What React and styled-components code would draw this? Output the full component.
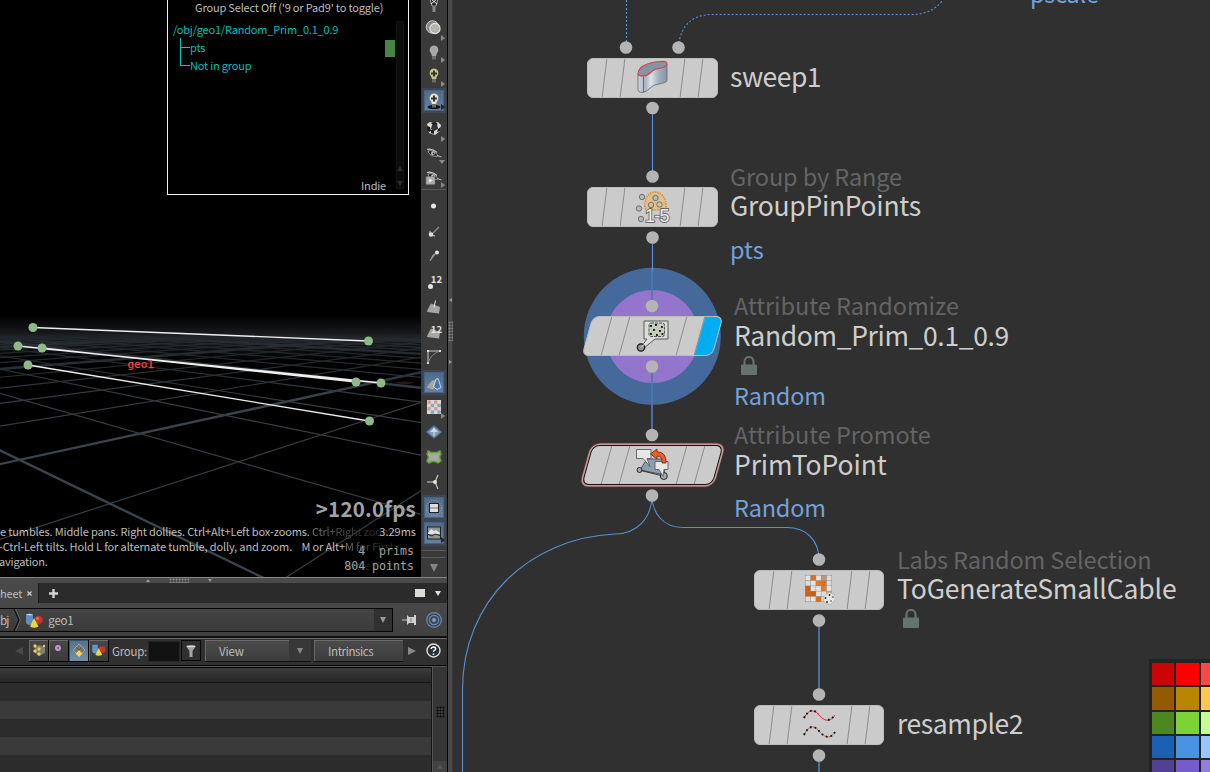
import React from 'react';
import styled, { createGlobalStyle, css } from 'styled-components';

const Global = createGlobalStyle`
  * { box-sizing: border-box; }
  html, body { margin: 0; padding: 0; background: #303030; overflow: hidden; }
  body { font-family: "Noto Sans CJK SC", "Noto Sans", sans-serif; color: #c4c4c4; }
  svg { display: block; }
`;

const Shell = styled.div`
  display: flex;
  width: 1210px;
  height: 772px;
  overflow: hidden;
`;
const LeftPane = styled.div`
  display: flex;
  flex-direction: column;
  width: 447px;
  flex: none;
  background: #303030;
`;
const ViewRow = styled.div`
  display: flex;
  height: 577px;
  flex: none;
`;
const Viewport = styled.div`
  position: relative;
  width: 421px;
  height: 577px;
  background: #000;
  overflow: hidden;
`;
const Scene = styled.svg`
  position: absolute;
  inset: 0;
`;
const Label = styled.span`
  font-size: ${p => p.$size || 11}px;
  letter-spacing: ${p => (p.$track === undefined ? -0.19 : p.$track)}px;
  line-height: ${p => p.$line || 18}px;
  color: ${p => p.$color || '#bdbdbd'};
  white-space: pre;
`;

/* group list overlay */
const GroupPanel = styled.div`
  position: absolute;
  left: 167px;
  top: -10px;
  width: 242px;
  height: 205px;
  border: 1px solid #f2f2f2;
  background: #000;
  display: flex;
  flex-direction: column;
  padding: 7px 2px 2px 5px;
`;
const PanelTitle = styled.div`
  display: flex;
  height: 22px;
  padding-left: 22px;
`;
const PanelBody = styled.div`
  display: flex;
  flex: 1;
  justify-content: space-between;
`;
const Tree = styled.div`
  display: flex;
  flex-direction: column;
  flex: 1;
`;
const TreeRow = styled.div`
  display: flex;
  height: 18px;
  padding-left: ${p => (p.$child ? 7 : 0)}px;
`;
const Branch = styled.div`
  width: 10px;
  height: ${p => (p.$last ? 10 : 18)}px;
  border-left: 1px solid #00c8c4;
  position: relative;
  &::after {
    content: '';
    position: absolute;
    left: 0;
    top: 9px;
    width: 9px;
    border-top: 1px solid #00c8c4;
  }
`;
const Swatch = styled.div`
  width: 10px;
  height: 17px;
  margin-top: 20px;
  background: #4a8447;
`;
const Scroller = styled.div`
  width: 8px;
  height: 168px;
  margin: 1px 2px 0 1px;
  background: #0c0c0c;
  border: 1px solid #121212;
  display: flex;
  flex-direction: column;
  justify-content: flex-end;
  gap: 10px;
  align-items: center;
  padding-bottom: 2px;
`;
const PanelFoot = styled.div`
  position: absolute;
  right: 22px;
  bottom: -1px;
`;

const Fps = styled.div`
  position: absolute;
  right: 5px;
  top: 493px;
  font: bold 20.5px/30px "Noto Sans CJK SC", sans-serif;
  letter-spacing: 0.25px;
  color: #a2a2a2;
`;
const Stats = styled.div`
  position: absolute;
  right: 7px;
  top: 544px;
  display: flex;
  flex-direction: column;
  align-items: flex-end;
  font: 11.6px/15px "DejaVu Sans Mono", monospace;
  color: #a0a0a0;
  white-space: pre;
`;
const Millis = styled.div`
  position: absolute;
  right: 5px;
  top: 522px;
  line-height: 18px;
  display: flex;
`;
const Edition = styled.div`
  position: absolute;
  left: 346px;
  top: 551px;
`;
const Hints = styled.div`
  position: absolute;
  left: -5px;
  top: 524px;
  display: flex;
  flex-direction: column;
`;
const HintLine = styled.div`
  display: flex;
  height: 15px;
  padding-left: ${p => p.$pad || 0}px;
`;
const Fade = styled(Label)`
  background: linear-gradient(90deg, #777, #3a3a3a 50%, #222);
  background-clip: text;
  -webkit-background-clip: text;
  color: transparent;
`;

/* vertical tool strip */
const Strip = styled.div`
  width: 26px;
  height: 577px;
  background: #3a3a3a;
  display: flex;
  flex-direction: column;
  overflow: hidden;
`;
const Tool = styled.div`
  position: relative;
  height: ${p => p.$h}px;
  flex: none;
  display: flex;
  align-items: center;
  justify-content: center;
  margin: 0 1px;
  ${p => p.$on && css`
    background: linear-gradient(#4e6a8c, #66819f);
    border: 2px solid #3b4756;
    box-shadow: inset 0 0 0 1px #4a6280;
  `}
  ${p => p.$rule && css`border-bottom: 1px solid #5a5a5a;`}
`;
const Corner = styled.span`
  position: absolute;
  right: ${p => (p.$on ? -1 : 1)}px;
  bottom: 1px;
  border-style: solid;
  ${p => p.$down
    ? css`border-width: 4px 3.5px 0; border-color: #8a8a8a transparent;`
    : css`border-width: 3.5px 0 3.5px 4px; border-color: transparent ${p.$on ? '#222' : '#8a8a8a'};`}
`;
const Arrow = styled.span`
  width: 0;
  height: 0;
  border-style: solid;
  ${p => {
    const s = p.$s || 4;
    const h = p.$len || s * 1.6;
    const c = p.$c || '#9a9a9a';
    if (p.$dir === 'down') return css`border-width: ${h}px ${s}px 0; border-color: ${c} transparent;`;
    if (p.$dir === 'up') return css`border-width: 0 ${s}px ${h}px; border-color: ${c} transparent;`;
    if (p.$dir === 'left') return css`border-width: ${s}px ${h}px ${s}px 0; border-color: transparent ${c};`;
    return css`border-width: ${s}px 0 ${s}px ${h}px; border-color: transparent ${c};`;
  }}
`;

/* lower pane */
const Splitter = styled.div`
  height: 6px;
  background: #4a4a4a;
  border-top: 1px solid #858585;
  display: flex;
  align-items: center;
  padding-left: 146px;
  gap: 19px;
`;
const Dots = styled.span`
  width: ${p => p.$w}px;
  height: ${p => p.$h}px;
  background-image: radial-gradient(circle, ${p => p.$c || '#909090'} 0.9px, transparent 1.1px);
  background-size: 3px 3px;
`;
const Tabs = styled.div`
  display: flex;
  height: 20px;
  background: #2b2b2b;
  align-items: center;
  padding-right: 6px;
`;
const Tab = styled.div`
  display: flex;
  align-items: center;
  justify-content: space-between;
  width: 39px;
  height: 20px;
  padding-right: 6px;
  background: #484848;
  border-right: 1px solid #1a1a1a;
  overflow: hidden;
`;
const Spacer = styled.div` flex: 1; `;
const Square = styled.span`
  width: 10px;
  height: 8px;
  margin-right: 10px;
  background: #dddcd6;
`;
const AddTab = styled.svg` margin-left: 10px; `;
const PathBar = styled.div`
  display: flex;
  height: 33px;
  padding: 5px 5px 4px 0;
  background: linear-gradient(#484848, #404040);
  align-items: center;
`;
const PathField = styled.div`
  display: flex;
  align-items: center;
  width: 393px;
  height: 24px;
  border: 1px solid #050505;
  border-left: 0;
  background: linear-gradient(#444, #3b3b3b);
`;
const PathSep = styled.svg` margin-right: 2px; `;
const DropCell = styled.div`
  width: ${p => p.$w}px;
  align-self: stretch;
  display: flex;
  align-items: center;
  justify-content: center;
  background: ${p => p.$bg || '#303030'};
`;
const AttrBar = styled.div`
  display: flex;
  height: 30px;
  padding: 0 6px 2px 15px;
  background: #303030;
  border-top: 2px solid #101010;
  border-bottom: 1px solid #0a0a0a;
  box-shadow: inset 0 1px #686868;
  align-items: center;
`;
const Modes = styled.div`
  display: flex;
  margin-left: 6px;
  margin-right: 3px;
`;
const ModeButton = styled.div`
  width: 20px;
  height: 22px;
  display: flex;
  align-items: center;
  justify-content: center;
  border-right: 1px solid #050505;
  border-bottom: 1px solid #050505;
  background: ${p => (p.$on ? 'linear-gradient(#54708f,#7390b0)' : 'linear-gradient(#484848,#3a3a3a)')};
  box-shadow: inset 1px 1px ${p => (p.$on ? '#3b5068' : '#686868')};
`;
const GroupInput = styled.div`
  width: 32px;
  height: 21px;
  margin: 2px 1px 0 1px;
  background: #121212;
  border: 1px solid #262626;
`;
const FilterButton = styled.div`
  width: 20px;
  height: 21px;
  border: 1px solid #060606;
  display: flex;
  align-items: center;
  justify-content: center;
`;
const MenuButton = styled.div`
  display: flex;
  align-items: center;
  width: ${p => p.$w}px;
  height: 21px;
  margin-left: ${p => p.$ml}px;
  padding-left: 14px;
  justify-content: space-between;
  background: linear-gradient(#4b4b4b, #3d3d3d);
  box-shadow: inset 1px 1px #6a6a6a, 0 1px #111;
`;
const TableRow = styled.div`
  display: flex;
  flex: 1;
  min-height: 0;
  border-top: 1px solid #555;
`;
const Table = styled.div`
  display: flex;
  flex-direction: column;
  width: 432px;
  border-right: 1px solid #151515;
  overflow: hidden;
`;
const Head = styled.div`
  height: 16px;
  flex: none;
  background: linear-gradient(#3c3c3c, #262626);
  border-top: 1px solid #080808;
  border-bottom: 1px solid #151515;
`;
const Stripe = styled.div`
  height: 18px;
  flex: none;
  background: ${p => (p.$odd ? '#3a3a3a' : '#2c2c2c')};
`;
const Gutter = styled.div`
  flex: 1;
  display: flex;
  flex-direction: column;
  align-items: center;
  background: #363636;
  border-left: 1px solid #555;
  padding-top: 39px;
  justify-content: space-between;
`;
const GutterEnd = styled.div`
  width: 100%;
  height: 11px;
  background: #414141;
  display: flex;
  align-items: center;
  justify-content: center;
`;

const Divider = styled.div`
  width: 6px;
  flex: none;
  background: #4a4a4a;
  border-left: 1px solid #050505;
  border-right: 1px solid #3a3a3a;
  display: flex;
  flex-direction: column;
  align-items: center;
  padding-top: 298px;
  gap: 19px;
`;

/* network canvas */
const Canvas = styled.div`
  position: relative;
  flex: 1;
  background: #303030;
  overflow: hidden;
`;
const Wires = styled.svg`
  position: absolute;
  inset: 0;
`;
const NodeBox = styled.div`
  position: absolute;
  left: ${p => p.$x - 453}px;
  top: ${p => p.$y}px;
  width: ${p => p.$w}px;
  height: 40px;
`;
const NodeBody = styled.div`
  display: flex;
  width: 100%;
  height: 100%;
  overflow: hidden;
  border-radius: 6px;
  border: 1px solid ${p => (p.$picked ? '#111' : '#bcbcbc')};
  background: #cbcbcb;
  ${p => p.$slant && css`transform: skewX(-15.5deg); border-radius: 7px;`}
  ${p => p.$picked && css`box-shadow: 0 0 0 1.6px #cd9697, 0 0 0 2.2px #5c4444;`}
`;
const Segment = styled.div`
  position: relative;
  width: ${p => p.$w}px;
  flex: none;
  background: ${p => p.$fill || 'transparent'};
  &::after {
    content: '';
    display: ${p => (p.$end ? 'none' : 'block')};
    position: absolute;
    right: 0;
    top: 0;
    bottom: 0;
    width: 1px;
    background: #8c8c8c;
    transform: skewX(${p => (p.$slant ? 0 : -7)}deg);
  }
`;
const NodeIcon = styled.div`
  position: absolute;
  inset: 0;
  display: flex;
  align-items: center;
  justify-content: center;
`;
const Caption = styled.div`
  position: absolute;
  left: ${p => p.$x - 453}px;
  top: ${p => p.$base - p.$size * 0.436 - 20}px;
  font-size: ${p => p.$size}px;
  line-height: 40px;
  letter-spacing: ${p => p.$track || 0}px;
  color: ${p => p.$color};
  white-space: pre;
`;
const LockSlot = styled.div`
  position: absolute;
  left: ${p => p.$x - 453}px;
  top: ${p => p.$y}px;
`;
const Palette = styled.div`
  position: absolute;
  left: 696px;
  top: 659px;
  padding: 4px 0 0 3px;
  display: grid;
  grid-template-columns: 22px 23px 23px;
  grid-auto-rows: 22.3px;
  gap: 2px;
  background: #242424;
`;
const Cell = styled.div` background: ${p => p.$c}; `;

const vp1 = [700, 311.5];
const vp2 = [-290, 310];
const gridLines = [];
for (let k = -2; k < 34; k++) {
  const inv = 4.587 + 1.515 * k;
  const x = -1000;
  gridLines.push({ x1: vp1[0], y1: vp1[1], x2: x, y2: vp1[1] + (vp1[0] - x) / inv, big: k % 5 === 0 });
}
for (let k = 0; k < 34; k++) {
  const inv = 2.066 + 1.415 * k;
  const x = 1500;
  gridLines.push({ x1: vp2[0], y1: vp2[1], x2: x, y2: vp2[1] + (x - vp2[0]) / inv, big: k % 5 === 0 });
}
const points = [[33, 327.5], [368.5, 341], [18, 346], [42, 348], [356, 382], [381, 383], [28, 365], [369.5, 421]];

function ViewScene() {
  return (
    <Scene width="421" height="577" viewBox="0 0 421 577">
      <defs>
        <linearGradient id="haze" x1="0" x2="0" y1="0" y2="1">
          <stop offset="0" stopColor="#262b30" stopOpacity="0" />
          <stop offset="0.5" stopColor="#262b30" stopOpacity="0.75" />
          <stop offset="1" stopColor="#1a1e22" stopOpacity="0" />
        </linearGradient>
        <linearGradient id="fade" gradientUnits="userSpaceOnUse" x1="0" x2="0" y1="333" y2="400">
          <stop offset="0" stopColor="#fff" stopOpacity="0" />
          <stop offset="0.14" stopColor="#fff" stopOpacity="0.5" />
          <stop offset="1" stopColor="#fff" />
        </linearGradient>
        <mask id="gm" maskUnits="userSpaceOnUse" x="0" y="0" width="421" height="577">
          <rect width="421" height="577" fill="url(#fade)" />
        </mask>
      </defs>
      <rect y="315" width="421" height="46" fill="url(#haze)" />
      <g mask="url(#gm)">
        {gridLines.map((l, i) => (
          <line key={i} x1={l.x1} y1={l.y1} x2={l.x2} y2={l.y2} stroke={l.big ? '#3b434c' : '#373d44'} strokeWidth={l.big ? 2.4 : 1.2} />
        ))}
      </g>
      <path d="M392 383l12-1.500 12 1-10 2z" fill="#2b1717" />
      <g stroke="#efefef" strokeWidth="1.300">
        <path d="M33 327.500L368 341M28 365L369 421" />
        <path d="M18 346L381 383M42 348L356 382" strokeWidth="1.500" />
      </g>
      {points.map(([x, y], i) => <circle key={i} cx={x} cy={y} r="4.500" fill="#8fb88b" />)}
      <text x="127.500" y="367.500" fontFamily="DejaVu Sans Mono" fontSize="11" fill="#f04444" stroke="#f04444" strokeWidth="0.250">geo1</text>
    </Scene>
  );
}

const Bulb = ({ c = '#a9a9a4', plus, base }) => (
  <svg width="18" height="18" viewBox="0 0 18 18">
    {base && <ellipse cx="9" cy="15" rx="6.500" ry="2" fill="#111" />}
    <path d="M9 1.500a4.500 4.500 0 0 1 3 7.800L11 12H7L6 9.300A4.500 4.500 0 0 1 9 1.500z" fill={c} />
    <path d="M7 12h4v3.500H7z" fill="#666b6b" />
    {plus && <path d="M8 3.500h2v2h2v2h-2v2H8v-2H6v-2h2z" fill="#333" />}
  </svg>
);
const Eye = ({ box }) => (
  <svg width="18" height="18" viewBox="0 0 18 18">
    <path d="M3 6c3-1 7 0 10 5-5 1-9-1-10-5z" fill="#1e1e1e" stroke="#aaa" strokeWidth="0.900" />
    <path d="M12 10.500l4.500 1.500" stroke="#bbb" />
    <circle cx="8" cy="8.300" r="1.900" fill="#d4d4d4" /><circle cx="8.500" cy="8.500" r="0.900" fill="#222" />
    <path d="M2 4.500q5-1.500 10 3" stroke="#c9c9c9" strokeWidth="1.100" fill="none" />
    {box && <g><rect x="1" y="8.500" width="9" height="8" rx="1" fill="#aaa" stroke="#777" strokeWidth="0.500" /><path d="M4 10.500l4 2-4 2z" fill="#f0f0f0" /></g>}
  </svg>
);
const Checker = () => (
  <svg width="16" height="16" viewBox="0 0 16 16">
    <path d="M1 4l3-2 4 1 4-1 3 3-1 6-5 4-6-2z" fill="#d8d8d8" />
    <path d="M5 3l4-1 3 2-4 2zM1 6l3 1 1 4-2 1-2-3zM5 10l3 0v4l-3-1zM12 9l3-2-1 4-3 1z" fill="#1d1d1d" />
    <path d="M6 5l5-1 1 5-4 2-3-2z" fill="#333" />
  </svg>
);
const Face = ({ num, blue }) => (
  <svg width="18" height="18" viewBox="0 0 18 18">
    <path d={blue ? 'M1.500 13.500L7 6.500l6-.5-3 8-3 1.500z' : 'M2.500 12L6 5.500l9 3.500-1 6.500L2 14z'} fill="#a7a7a1" />
    {blue && <path d="M8.500 13l2.500-8 2-.5 3 9-4 2z" fill="#4377b4" stroke="#d3e2f0" strokeWidth="0.900" />}
    {!num && !blue && <path d="M10.500 2.500l-1.500 7" stroke="#e8e8e8" />}
  </svg>
);
const NumOverlay = styled.span`
  position: absolute;
  right: 4px;
  top: ${p => p.$t}px;
  font: bold 9.5px/10px "Noto Sans CJK SC", sans-serif;
  color: #e2e2e2;
`;
const Svg18 = ({ children }) => <svg width="18" height="18" viewBox="0 0 18 18">{children}</svg>;

function ToolStrip() {
  return (
    <Strip>
      <Tool $h={15}><Svg18><path d="M5 0h8l-2 7H7z" fill="#222" stroke="#aaa" strokeWidth="1" /><path d="M6 0l6 5M12 0L6 5" stroke="#eee" /><rect x="7.500" y="8" width="3" height="5" fill="#888" /></Svg18></Tool>
      <Tool $h={27}><Svg18><circle cx="7.500" cy="7" r="6.300" fill="#868a87" stroke="#c5c9c6" /><circle cx="10" cy="8.500" r="5" fill="#a5a7a1" stroke="#e4e4df" strokeWidth="1.300" /><path d="M8 6v5M10 5v7M12 6v5" stroke="#d6d6d0" strokeWidth="0.700" /></Svg18><Corner /></Tool>
      <Tool $h={22}><Bulb /><Corner /></Tool>
      <Tool $h={24}><Bulb c="#c6c685" plus /><Corner /></Tool>
      <Tool $h={25} $on><Bulb c="#e8e8c8" plus base /><Corner $on /></Tool>
      <Tool $h={30}><Checker /><Corner /></Tool>
      <Tool $h={22}><Eye /><Corner $down /></Tool>
      <Tool $h={25} $rule><Eye box /><Corner /></Tool>
      <Tool $h={30}><Svg18><circle cx="8.500" cy="10" r="2.500" fill="#e9e9e4" /></Svg18></Tool>
      <Tool $h={24}><Svg18><path d="M14 4L8 10" stroke="#7c9095" strokeWidth="1.500" /><path d="M5 8l0 4 5 1" fill="none" stroke="#ccc" strokeWidth="1" /><circle cx="6" cy="11.500" r="2.300" fill="#ddd" /></Svg18></Tool>
      <Tool $h={24}><Svg18><path d="M11 6L5 14l3-6z" fill="#999" stroke="#999" strokeWidth="1" /><circle cx="12" cy="5.500" r="2" fill="#e4e4df" /></Svg18></Tool>
      <Tool $h={27}><Svg18><circle cx="5.500" cy="13.500" r="2.500" fill="#e4e4df" /></Svg18><NumOverlay $t={6}>12</NumOverlay></Tool>
      <Tool $h={24}><Face /></Tool>
      <Tool $h={25}><Face num /><NumOverlay $t={5}>12</NumOverlay></Tool>
      <Tool $h={26}><Svg18><path d="M3 3h12M3 3v13" stroke="#ccc" /><path d="M3 15C5 9 9 5 15 3" stroke="#888" fill="none" /><path d="M2 2h2v2H2zM14 2h2v2h-2zM2 14h2v2H2z" fill="#ddd" /></Svg18></Tool>
      <Tool $h={25} $on><Face blue /></Tool>
      <Tool $h={25}>
        <Svg18>
          <rect x="2" y="1" width="14" height="14" fill="#d8d8d4" />
          {[0, 1, 2, 3].map(r => [0, 1, 2, 3].map(c => (r + c) % 2 === 0 && <rect key={`${r}${c}`} x={2.5 + c * 3.3} y={1.5 + r * 3.3} width="3.300" height="3.300" fill={(r % 2) ? '#8fa5c2' : '#cf9c9c'} />))}
        </Svg18><Corner />
      </Tool>
      <Tool $h={24}><Svg18><path d="M9 3l7 6-7 6-7-6z" fill="#8e9ca8" stroke="#4c7cb4" strokeWidth="1.300" /><path d="M9 5l4 4H5z" fill="#d4d6d6" /><path d="M9 5v8" stroke="#e0e0e0" /></Svg18></Tool>
      <Tool $h={25}><Svg18><path d="M3 3l3 1.500h6L15 3l1 3-1.500 3 1.500 4-3 2-3-1.500H7L4 15l-2-2 1.500-4L2 6z" fill="#a4aa9f" stroke="#5ea237" strokeWidth="1.500" /></Svg18></Tool>
      <Tool $h={26}><Svg18><path d="M10 9L13 2M10 9l3 7M10 9H2" stroke="#c8c8c4" strokeWidth="1.200" /><circle cx="10" cy="9" r="2" fill="#e6e6e0" /></Svg18></Tool>
      <Tool $h={25} $on><Svg18><circle cx="9" cy="9" r="7.500" fill="none" stroke="#9aa6b2" strokeDasharray="1 1.300" /><rect x="4.500" y="4.500" width="9" height="9" fill="#dedede" stroke="#222" /><path d="M5 9h8" stroke="#777" /></Svg18></Tool>
      <Tool $h={26} $on><Svg18><rect x="2.500" y="3" width="13" height="12" fill="#8e9494" stroke="#222" /><path d="M3 9l3-4 3 2 2-1 4 3v1H3z" fill="#e4e4e0" /><path d="M3 10.500l4 1.500 3-2 5 1.500" stroke="#222" fill="none" /></Svg18><Corner $on /></Tool>
      <Tool $h={5} $rule />
      <Tool $h={7} $rule />
      <Tool $h={19}><Arrow $dir="down" $s={4.5} $len={8} $c="#858585" /></Tool>
    </Strip>
  );
}

const Geo = () => (
  <svg width="17" height="15" viewBox="0 0 17 15">
    <path d="M0 1.500Q3.500 0 7 1.500V10Q3.500 14 0 10z" fill="#5f8ec2" /><path d="M0 1.500Q3.500 0 7 1.500Q3.500 3.500 0 1.500z" fill="#bcd2e6" />
    <circle cx="12.500" cy="7" r="4.300" fill="#c8332b" /><circle cx="11.500" cy="5.500" r="1.300" fill="#e88078" />
    <path d="M8 5l4.500 8.500Q8 16 4 13.500z" fill="#e8d83c" />
  </svg>
);

function LowerPane() {
  return (
    <>
      <Splitter>
        <Arrow $dir="up" $s={2.5} $len={3} /><Dots $w={20} $h={5} $c="#8c8c8c" /><Arrow $dir="down" $s={2.5} $len={3} />
      </Splitter>
      <Tabs>
        <Tab><Label $size={11}>heet</Label><svg width="5" height="5" viewBox="0 0 5 5"><path d="M.5 .5l4 4M4.500 .5l-4 4" stroke="#ccc" strokeWidth="1.200" /></svg></Tab>
        <AddTab width="9" height="9" viewBox="0 0 9 9"><path d="M4.500 0v9M0 4.500h9" stroke="#d4d4d4" strokeWidth="2.400" /></AddTab>
        <Spacer />
        <Square />
        <Arrow $dir="down" $s={3} $len={5} $c="#e0e0e0" />
      </Tabs>
      <PathBar>
        <PathField>
          <Label $size={11.5} $track={-0.9}>bj</Label>
          <PathSep width="16" height="22" viewBox="4 0 16 22"><path d="M10 0l5 11-5 11" fill="none" stroke="#111" strokeWidth="1.300" /><path d="M11.500 0l5 11-5 11" fill="none" stroke="#626262" /></PathSep>
          <Geo />
          <Label $size={11.5}>{'  geo1'}</Label>
          <Spacer />
          <DropCell $w={18}><Arrow $dir="down" $s={3.5} $len={6} /></DropCell>
        </PathField>
        <Spacer />
        <svg width="16" height="14" viewBox="0 0 16 14"><path d="M0 7h6" stroke="#aaa" strokeWidth="1.300" /><path d="M5 2l2 2h5V2h2v10h-2v-2H7l-2 2z" fill="#cfcfca" /><path d="M9 5v4" stroke="#777" /></svg>
        <Spacer />
        <svg width="16" height="16" viewBox="0 0 16 16" fill="none" stroke="#6289bd"><circle cx="8" cy="8" r="7.300" strokeWidth="1.200" /><circle cx="8" cy="8" r="4.600" strokeWidth="1.200" /><circle cx="8" cy="8" r="1.800" fill="#76a3de" /></svg>
      </PathBar>
      <AttrBar>
        <Arrow $dir="left" $s={4} $len={8} $c="#484848" />
        <Modes>
          <ModeButton><svg width="14" height="14" viewBox="0 0 14 14"><path d="M3 4l4-2 6 2v6l-6 3-4-3z" fill="#7d7d75" /><g fill="#ecc75a"><circle cx="3" cy="3" r="1.700" /><circle cx="7" cy="6" r="1.700" /><circle cx="3" cy="8" r="1.700" /><circle cx="7" cy="11" r="1.700" /><circle cx="12" cy="3" r="1.200" /></g></svg></ModeButton>
          <ModeButton><svg width="14" height="14" viewBox="0 0 14 14"><circle cx="6" cy="5" r="2.200" fill="#8d6e9b" stroke="#c7a0d6" strokeWidth="1.500" /></svg></ModeButton>
          <ModeButton $on><svg width="14" height="14" viewBox="0 0 14 14"><path d="M7 1l6 6-6 6-6-6z" fill="#77766e" stroke="#b0af9f" strokeWidth="0.800" /><path d="M4 4l6 6M10 4l-6 6" stroke="#4f4f49" strokeWidth="0.700" /><path d="M7 7l3.500 3.500L7 14l-3.500-3.500z" fill="#f6cf5a" /></svg></ModeButton>
          <ModeButton><svg width="14" height="12" viewBox="0 0 17 15"><path d="M0 1h7v9q-3 4-7 0z" fill="#6793c5" /><circle cx="12.500" cy="7" r="4.300" fill="#c8332b" /><path d="M8 5l4.500 8.500Q8 16 4 13.500z" fill="#e8d83c" /></svg></ModeButton>
        </Modes>
        <Label $size={11.5} $track={-0.25}>Group:</Label>
        <GroupInput />
        <FilterButton><svg width="12" height="14" viewBox="0 0 12 14"><path d="M1 2q5-2 10 0L7.500 7v6h-3V7z" fill="#a5a5a2" /><path d="M2 2.500h8" stroke="#ddd" /></svg></FilterButton>
        <MenuButton $w={106} $ml={4}><Label $size={11.5}>View</Label><DropCell $w={22} $bg="#383838"><Arrow $dir="down" $s={3.5} $len={6} $c="#858585" /></DropCell></MenuButton>
        <MenuButton $w={89} $ml={3}><Label $size={11.5} $track={-0.4}>Intrinsics</Label></MenuButton>
        <Spacer />
        <Arrow $dir="right" $s={4} $len={8} $c="#8a8a8a" />
        <Spacer />
        <Spacer />
        <svg width="15" height="15" viewBox="0 0 15 15"><circle cx="7.500" cy="7.500" r="6.500" fill="#293036" stroke="#dedede" strokeWidth="1.400" /><path d="M5.200 6q.3-2 2.300-2t2.200 1.800q0 1-1.200 1.600t-1 1.600M7.500 10.500v1.500" stroke="#fff" strokeWidth="1.500" fill="none" /></svg>
      </AttrBar>
      <TableRow>
        <Table>
          <Head />
          {[0, 1, 2, 3, 4].map(i => <Stripe key={i} $odd={i % 2 === 1} />)}
        </Table>
        <Gutter>
          <Dots $w={9} $h={12} $c="#0a0a0a" />
          <GutterEnd><Arrow $dir="up" $s={3} $len={5} $c="#575757" /></GutterEnd>
        </Gutter>
      </TableRow>
    </>
  );
}

const SweepIcon = () => (
  <svg width="34" height="36" viewBox="0 0 34 36">
    <defs><linearGradient id="swp"><stop stopColor="#d4d6da" /><stop offset=".25" stopColor="#a9b3c0" /><stop offset=".45" stopColor="#dde2e7" /><stop offset=".7" stopColor="#a3b2bf" /><stop offset="1" stopColor="#8494a3" /></linearGradient></defs>
    <path d="M3 14V30Q3.500 33 8 32.500Q13 31 15 28Q18 24.500 24 24Q32 22.500 32 20.500V4z" fill="url(#swp)" stroke="#5e6874" strokeWidth="0.800" />
    <path d="M3 14C3 7 12 3 20 2L28 1.300Q32 1.500 32 4Q31.500 7 26 8Q19 9 16 12.500Q12 16 8 16Q3.500 16 3 14z" fill="#8793a3" stroke="#d2424a" strokeWidth="1.100" />
    <path d="M8.500 16v16.500" stroke="#d2424a" />
  </svg>
);
const Ball = ({ x, y, c = '#b4bcb4' }) => <circle cx={x} cy={y} r="2.700" fill={c} stroke="#566058" strokeWidth="0.800" />;
const DigitsWrap = styled.span`
  position: absolute;
  left: 58px;
  top: 19px;
  font: 18px/20px "Liberation Sans", sans-serif;
  letter-spacing: -0.7px;
  color: #ececec;
  -webkit-text-stroke: 1.8px #666;
  paint-order: stroke fill;
`;
const RangeIcon = () => (
  <>
    <svg width="34" height="36" viewBox="0 0 34 36">
      <path d="M10 18C9 9 14 3 20 3s12 6 11 15q-1 3-4 3H13q-3 0-3-3z" fill="#dcbf92" stroke="#e58a1c" strokeWidth="1.500" strokeDasharray="1.500 1" />
      <Ball x={20.5} y={9} /><Ball x={16} y={16} c="#d8c590" /><Ball x={24.5} y={15.5} c="#d8c590" /><Ball x={7} y={8} /><Ball x={4} y={19.5} /><Ball x={6} y={30} />
    </svg>
    <DigitsWrap>1-5</DigitsWrap>
  </>
);
const RandomIcon = () => (
  <svg width="38" height="36" viewBox="0 0 38 36">
    <path d="M10 3h24v18H21l-11 9-2-2 5-7h-3z" fill="#dcdcd8" stroke="#4a4e4e" strokeWidth="0.900" />
    <rect x="15" y="5" width="15.500" height="13.500" rx="2" fill="#c6cbc0" stroke="#333" strokeDasharray="3 1" strokeWidth="0.800" />
    {[[17, 8], [22, 7], [28, 9], [20, 12], [26, 13], [17, 16], [23, 17], [28.5, 16]].map(([a, b]) => <rect key={`${a}-${b}`} x={a - 1} y={b - 1} width="1.900" height="1.900" fill="#151515" />)}
    <circle cx="7" cy="29.500" r="3.700" fill="#8d9292" stroke="#151515" strokeWidth="1.200" /><path d="M7 29.500l6-6" stroke="#eee" />
  </svg>
);
const PromoteIcon = () => (
  <svg width="36" height="34" viewBox="0 0 36 34">
    <path d="M5 22L12 11h16l2 16z" fill="#8ba0ad" stroke="#4b5862" />
    <path d="M4 22l24 6" stroke="#333" />
    <circle cx="4.500" cy="22" r="2.500" fill="#aaa" stroke="#222" /><circle cx="28.800" cy="28" r="3.500" fill="#aaa" stroke="#222" />
    <path d="M1.500 1.500H16V10.500h-4l3 8-7-8H1.500z" fill="#e5e8e3" stroke="#4a4f4d" strokeWidth="0.800" />
    <path d="M20 13.500h13v8h-4l-1 7-4-7h-4z" fill="#e5e8e3" stroke="#4a4f4d" strokeWidth="0.800" />
    <path d="M15.500 6l6.500-5v2.800q9.500 0 9 11.200h-4q1-7-5-7v3z" fill="#e9602c" stroke="#942f12" strokeWidth="1" />
  </svg>
);
const mosaic = ['#e4e4e4', '#e07018', '#e4e4e4', '#c9936c', '#dcdcdc', '#dcdcdc', '#e4e4e4', '#e07b2a', '#e07018', '#dcdcdc', '#d85a00', '#e4e4e4', '#e4e4e4', '#e07b2a', '#e4e4e4', '#d85a00', '#d85a00', '#e4e4e4', '#dcdcdc', '#e4a272', '#dcdcdc', '#e4e4e4', '#e06a10', '#e4e4e4', '#e4e4e4'];
const LabsIcon = () => (
  <svg width="32" height="32" viewBox="0 0 32 32">
    <rect x="2" y="1" width="27" height="27" fill="#8d8d8d" />
    {mosaic.map((c, i) => <rect key={i} x={2.5 + (i % 5) * 5.3} y={1.5 + Math.floor(i / 5) * 5.3} width="4.800" height="4.800" fill={c} />)}
    <path d="M20 23l6-5 6 3v5l-5 5-6-3z" fill="#e4e4e0" stroke="#999" strokeWidth="0.500" />
    <g fill="#222"><circle cx="22.500" cy="24" r="0.900" /><circle cx="26.500" cy="21" r="0.900" /><circle cx="30" cy="23" r="0.800" /><circle cx="24" cy="28" r="0.900" /><circle cx="28" cy="27" r="0.700" /></g>
  </svg>
);
const ResampleIcon = () => (
  <svg width="36" height="32" viewBox="0 0 36 32" fill="none">
    <path d="M3 9C8 0 13 0 18 6s11 8 16 0" stroke="#d8322c" strokeWidth="1" />
    <path d="M3 9C8 0 13 0 17 5M27 11q4-1 7-5" stroke="#151515" strokeWidth="2" strokeDasharray="1.800 2.700" />
    <path d="M3 26C8 16 13 16 18 22s11 9 16 1" stroke="#c2605c" strokeWidth="1" />
    <path d="M3 26C8 16 13 16 18 22s11 9 16 1" stroke="#151515" strokeWidth="1.900" strokeDasharray="1.800 3" />
  </svg>
);

function Node({ x, y, slant, picked, flag, children }) {
  const w = slant ? [19, 18, 57, 18, 20] : [17, 18, 60, 18, 18];
  return (
    <NodeBox $x={x} $y={y} $w={slant ? 131 : 130.5}>
      <NodeBody $slant={slant} $picked={picked}>
        {w.map((s, i) => <Segment key={i} $w={s} $slant={slant} $end={i === 4} $fill={i === 4 && flag ? '#00adf2' : undefined} />)}
      </NodeBody>
      <NodeIcon>{children}</NodeIcon>
    </NodeBox>
  );
}
const Lock = () => (
  <svg width="18" height="20" viewBox="0 0 18 20">
    <path d="M4.500 9V5.500a4.500 4.500 0 0 1 9 0V9" fill="none" stroke="#68706e" strokeWidth="2.200" />
    <rect x="1" y="8.500" width="16" height="10.500" rx="1" fill="#667270" />
  </svg>
);
const dots = [[626, 47.5], [678.5, 47.5], [652.5, 108], [652.5, 176.5], [652.5, 237.5], [652, 306], [652, 366.5], [652, 435], [652, 495.5], [819, 559.5], [819, 620.5], [819, 694.5], [819, 755.5]];
const swatches = ['#cc0404', '#ff0000', '#ff4747', '#945a00', '#b88600', '#ffc84a', '#4c881d', '#7dd238', '#c4ff96', '#1a60b4', '#4a92e4', '#96c6ff', '#524094', '#745ccc', '#907fe0'];

const NAME = '#cecece';
const KIND = '#646464';
const TAG = '#74a0dc';

function Network() {
  return (
    <Canvas>
      <Wires width="757" height="772" viewBox="453 0 757 772" fill="none">
        <circle cx="652.300" cy="336.300" r="68.500" fill="#46699c" />
        <circle cx="652.300" cy="336.500" r="46.500" fill="#9375cb" />
        <g stroke="#5c93dc" strokeWidth="1.100">
          <path d="M626.500 0V47M678.500 47C680 26 692 14.500 712 14.500H912Q932 14.500 943 0" strokeDasharray="2 2" />
          <path d="M652.500 108V177M652.500 237V272" />
          <path d="M652 495C652 518 637 534 615 534C530 538 462.500 600 462.500 690V772" stroke="#5b8ecb" />
          <path d="M652 495C652 513 663 527.500 683 527.500H787C806 527.500 819 540 819 560" stroke="#5b8ecb" />
        </g>
        <path d="M652 270V306M652 366V435M819 620V695M819 755V772" stroke="#4f79b2" strokeWidth="1.700" />
      </Wires>
      <Node x={587} y={58}><SweepIcon /></Node>
      <Node x={587} y={187}><RangeIcon /></Node>
      <Node x={587} y={316} slant flag><RandomIcon /></Node>
      <Node x={587} y={445} slant picked><PromoteIcon /></Node>
      <Node x={753.75} y={570}><LabsIcon /></Node>
      <Node x={753.75} y={705}><ResampleIcon /></Node>
      <Wires width="757" height="772" viewBox="453 0 757 772">
        {dots.map(([x, y]) => <circle key={`${x}-${y}`} cx={x} cy={y} r="6.300" fill="#b4b4b4" />)}
      </Wires>
      <Caption $x={1030} $base={3} $size={23.5} $track={-0.25} $color={TAG}>pscale</Caption>
      <Caption $x={730} $base={88} $size={26.5} $track={-0.5} $color={NAME}>sweep1</Caption>
      <Caption $x={730} $base={186} $size={23.5} $track={-0.12} $color={KIND}>Group by Range</Caption>
      <Caption $x={730} $base={217} $size={26.5} $track={-0.28} $color={NAME}>GroupPinPoints</Caption>
      <Caption $x={730} $base={259} $size={23.5} $color={TAG}>pts</Caption>
      <Caption $x={734} $base={315} $size={23.5} $track={-0.04} $color={KIND}>Attribute Randomize</Caption>
      <Caption $x={734} $base={347} $size={26.5} $track={-0.36} $color={NAME}>Random_Prim_0.1_0.9</Caption>
      <LockSlot $x={740} $y={356}><Lock /></LockSlot>
      <Caption $x={734} $base={405} $size={23.5} $track={-0.2} $color={TAG}>Random</Caption>
      <Caption $x={734} $base={444} $size={23.5} $track={-0.04} $color={KIND}>Attribute Promote</Caption>
      <Caption $x={734} $base={476} $size={26.5} $track={-0.1} $color={NAME}>PrimToPoint</Caption>
      <Caption $x={734} $base={517} $size={23.5} $track={-0.2} $color={TAG}>Random</Caption>
      <Caption $x={897} $base={569} $size={23.5} $track={-0.14} $color={KIND}>Labs Random Selection</Caption>
      <Caption $x={897} $base={600} $size={26.5} $track={-0.14} $color={NAME}>ToGenerateSmallCable</Caption>
      <LockSlot $x={902} $y={609}><Lock /></LockSlot>
      <Caption $x={897} $base={735} $size={26.5} $track={-0.42} $color={NAME}>resample2</Caption>
      <Palette>{swatches.map(c => <Cell key={c} $c={c} />)}</Palette>
    </Canvas>
  );
}

export default function App() {
  return (
    <>
      <Global />
      <Shell>
        <LeftPane>
          <ViewRow>
            <Viewport>
              <ViewScene />
              <GroupPanel>
                <PanelTitle><Label $track={-0.17}>Group Select Off ('9 or Pad9' to toggle)</Label></PanelTitle>
                <PanelBody>
                  <Tree>
                    <TreeRow><Label $color="#00bfbb">/obj/geo1/Random_Prim_0.1_0.9</Label></TreeRow>
                    <TreeRow $child><Branch /><Label $color="#00bfbb">pts</Label></TreeRow>
                    <TreeRow $child><Branch $last /><Label $color="#00bfbb" $track={-0.2}>Not in group</Label></TreeRow>
                  </Tree>
                  <Swatch />
                  <Scroller><Arrow $dir="up" $s={3} $len={5} $c="#2c2c2c" /><Arrow $dir="down" $s={3} $len={5} $c="#2c2c2c" /></Scroller>
                </PanelBody>
                <PanelFoot><Label>Indie</Label></PanelFoot>
              </GroupPanel>
              <Edition><Label $color="#24240c" $size={11}>Indie Edition</Label></Edition>
              <Hints>
                <HintLine><Label $line={15} $track={-0.14}>se tumbles. Middle pans. Right dollies. Ctrl+Alt+Left box-zooms. </Label><Fade $line={15}>Ctrl+Right zooms</Fade></HintLine>
                <HintLine $pad={4}><Label $line={15} $track={-0.13}>-Ctrl-Left tilts. Hold L for alternate tumble, dolly, and zoom.    M or Alt+</Label><Fade $line={15}>M for First</Fade></HintLine>
                <HintLine $pad={4}><Label $line={15}>avigation.</Label></HintLine>
              </Hints>
              <Fps>&gt;120.0fps</Fps>
              <Millis><Label $track={0}>3.29ms</Label></Millis>
              <Stats><span>4  prims</span><span>804 points</span></Stats>
            </Viewport>
            <ToolStrip />
          </ViewRow>
          <LowerPane />
        </LeftPane>
        <Divider>
          <Arrow $dir="left" $s={2.5} $len={3} /><Dots $w={5} $h={20} $c="#858585" /><Arrow $dir="right" $s={2.5} $len={3} />
        </Divider>
        <Network />
      </Shell>
    </>
  );
}
